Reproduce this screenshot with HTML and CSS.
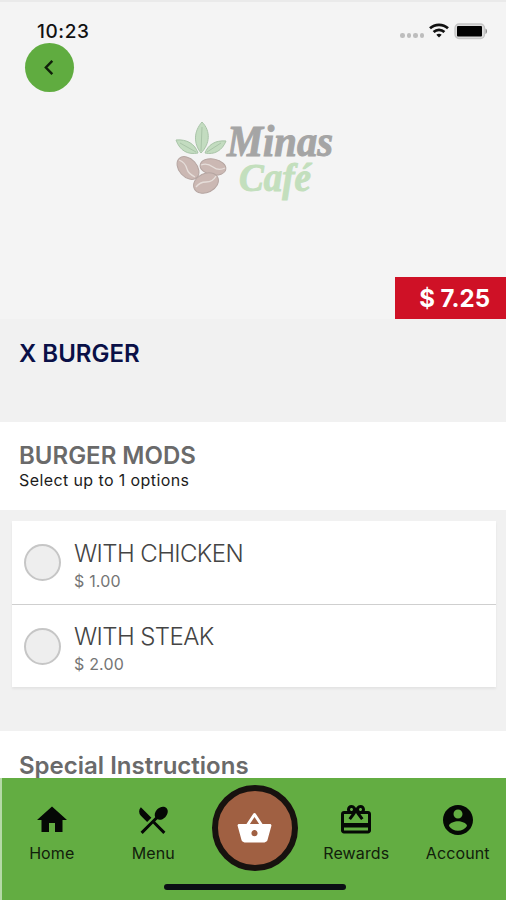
FILE: index.html
```html
<!DOCTYPE html>
<html lang="en">
<head>
  <meta charset="UTF-8">
  <meta name="viewport" content="width=device-width, initial-scale=1.0">
  <title>Minas Café</title>
  <link rel="stylesheet" href="styles.css">
</head>
<body>
  <div class="screen">
    <header class="hero">
      <div class="status-bar">
        <span class="time">10:23</span>
        <div class="status-icons">
          <div class="dots"><i></i><i></i><i></i><i></i></div>
          <svg class="wifi" viewBox="0 0 20 15" fill="none" stroke="#111" stroke-width="2.7">
            <path d="M1 5.3C6 .7 14 .7 19 5.3"/>
            <path d="M4.6 9C7.7 6.1 12.3 6.1 15.4 9"/>
            <path d="M10 14.6l-2.7-2.8c1.6-1.4 3.8-1.4 5.4 0z" fill="#111" stroke="none"/>
          </svg>
          <svg class="battery" viewBox="0 0 34 17">
            <rect x="1" y="1" width="29.5" height="14.5" rx="4" fill="#dcdcdc" stroke="#c4c4c4" stroke-width="1.3"/>
            <rect x="3" y="3" width="25" height="10.5" rx="1" fill="#000"/>
            <path d="M31.5 5.5c2 .8 2 4.7 0 5.5z" fill="#8b8b8b"/>
          </svg>
        </div>
      </div>

      <button class="back-btn" aria-label="Back">
        <svg viewBox="0 0 12 18" fill="none" stroke="#10200a" stroke-width="2.6"><path d="M9.5 2L2.7 9l6.800 7"/></svg>
      </button>

      <svg class="logo" viewBox="0 0 180 100">
        <g fill="#c3dcc0" stroke="#a9c4a8" stroke-width="1">
          <path d="M37 12c-8 9-9 21-1 31 9-9 10-22 1-31z"/>
          <path d="M11 30c4 11 12 15 22 13-3-9-11-14-22-13z"/>
          <path d="M61 31c-11-1-18 4-21 12 9 2 17-2 21-12z"/>
          <path d="M37 17l-1 24M15 33l16 9M56 33l-14 9" fill="none"/>
        </g>
        <g fill="#cbb8b3" stroke="#b5a5a1" stroke-width="1">
          <ellipse cx="23" cy="58" rx="13" ry="9" transform="rotate(48 23 58)"/>
          <ellipse cx="48" cy="57" rx="13" ry="8" transform="rotate(10 48 57)"/>
          <ellipse cx="41" cy="73" rx="13" ry="9.5" transform="rotate(-26 41 73)"/>
        </g>
        <g fill="none" stroke="#e6deda" stroke-width="1.3">
          <path d="M14 50c5 2 7 5 8 9s4 6 8 8"/>
          <path d="M36 55c5-2 8-1 12 2s8 3 12 1"/>
          <path d="M31 77c3-4 6-5 10-5s8-2 10-6"/>
        </g>
        <text class="logo-name" x="62" y="46" textLength="106" lengthAdjust="spacingAndGlyphs">Minas</text>
        <text class="logo-cafe" x="74" y="81" textLength="72" lengthAdjust="spacingAndGlyphs">Café</text>
      </svg>

      <div class="price">$ 7.25</div>
    </header>

    <section class="product">
      <h1>X BURGER</h1>
    </section>

    <section class="mods-header">
      <h2>BURGER MODS</h2>
      <p>Select up to 1 options</p>
    </section>

    <section class="options">
      <label class="option">
        <span class="radio"></span>
        <span class="option-text">
          <span class="option-name">WITH CHICKEN</span>
          <span class="option-price">$ 1.00</span>
        </span>
      </label>
      <label class="option">
        <span class="radio"></span>
        <span class="option-text">
          <span class="option-name">WITH STEAK</span>
          <span class="option-price">$ 2.00</span>
        </span>
      </label>
    </section>

    <section class="instructions">
      <h2>Special Instructions</h2>
    </section>

    <nav class="tab-bar">
      <div class="tabs">
        <a class="tab">
          <svg viewBox="0 0 24 24"><path d="M10 20v-6h4v6h5v-8h3L12 3 2 12h3v8z"/></svg>
          <span>Home</span>
        </a>
        <a class="tab">
          <svg viewBox="0 0 24 24"><path d="M8.1 13.34l2.83-2.83L3.91 3.5a4.008 4.008 0 0 0 0 5.66l4.19 4.18zm6.78-1.81c1.53.71 3.68.21 5.27-1.38 1.91-1.91 2.28-4.65.81-6.12-1.46-1.46-4.2-1.1-6.12.81-1.59 1.59-2.09 3.74-1.38 5.27L3.7 19.87l1.41 1.41L12 14.41l6.88 6.88 1.41-1.41L13.41 13l1.47-1.47z"/></svg>
          <span>Menu</span>
        </a>
        <a class="basket" aria-label="Basket">
          <svg viewBox="0 0 24 24"><path d="M17.21 9l-4.38-6.56c-.19-.28-.51-.42-.83-.42-.32 0-.64.14-.83.43L6.79 9H2c-.55 0-1 .45-1 1 0 .09.01.18.04.27l2.54 9.27c.23.84 1 1.46 1.92 1.46h13c.92 0 1.69-.62 1.93-1.46l2.54-9.27L23 10c0-.55-.45-1-1-1h-4.79zM9 9l3-4.4L15 9H9zm3 8c-1.1 0-2-.9-2-2s.9-2 2-2 2 .9 2 2-.9 2-2 2z"/></svg>
        </a>
        <a class="tab">
          <svg viewBox="0 0 24 24"><path d="M20 6h-2.18c.11-.31.18-.65.18-1 0-1.66-1.34-3-3-3-1.05 0-1.96.54-2.5 1.35l-.5.67-.5-.68C10.96 2.54 10.05 2 9 2 7.34 2 6 3.34 6 5c0 .35.07.69.18 1H4c-1.11 0-1.99.89-1.99 2L2 19c0 1.11.89 2 2 2h16c1.11 0 2-.89 2-2V8c0-1.11-.89-2-2-2zm-5-2c.55 0 1 .45 1 1s-.45 1-1 1-1-.45-1-1 .45-1 1-1zM9 4c.55 0 1 .45 1 1s-.45 1-1 1-1-.45-1-1 .45-1 1-1zm11 15H4v-2h16v2zm0-5H4V8h5.08L7 10.83 8.62 12 11 8.76l1-1.36 1 1.36L15.38 12 17 10.83 14.92 8H20v6z"/></svg>
          <span>Rewards</span>
        </a>
        <a class="tab">
          <svg viewBox="0 0 24 24"><path d="M12 2C6.48 2 2 6.48 2 12s4.48 10 10 10 10-4.48 10-10S17.52 2 12 2zm0 3c1.66 0 3 1.34 3 3s-1.34 3-3 3-3-1.34-3-3 1.34-3 3-3zm0 14.2c-2.5 0-4.71-1.28-6-3.22.03-1.99 4-3.08 6-3.08 1.99 0 5.97 1.09 6 3.08-1.29 1.94-3.5 3.22-6 3.22z"/></svg>
          <span>Account</span>
        </a>
      </div>
      <div class="home-indicator"></div>
    </nav>
  </div>
</body>
</html>
```
FILE: styles.css
```css
* {
  box-sizing: border-box;
  margin: 0;
  padding: 0;
}

body {
  font-family: Inter, "Liberation Sans", sans-serif;
  background-color: #f1f1f1;
}

.screen {
  width: 506px;
  height: 900px;
  overflow: hidden;
  display: flex;
  flex-direction: column;
}

.hero {
  height: 319px;
  flex-shrink: 0;
  background-color: #f4f4f4;
  border-top: 2px solid #eaeaea;
  display: flex;
  flex-direction: column;
}

.status-bar {
  height: 41px;
  padding: 18px 18px 0 37px;
  display: flex;
  justify-content: space-between;
}

.time {
  font-size: 19px;
  line-height: 23px;
  font-weight: 500;
  letter-spacing: 0.6px;
  color: #111;
}

.status-icons {
  display: flex;
  align-items: flex-start;
  padding-top: 3px;
}

.dots {
  display: flex;
  gap: 2px;
  margin: 10px 5px 0 0;
}

.dots i {
  width: 4.5px;
  height: 4.5px;
  border-radius: 50%;
  background-color: #bdbdbd;
}

.wifi {
  width: 20px;
  height: 15px;
  margin-right: 5px;
}

.battery {
  width: 34px;
  height: 17px;
}

.back-btn {
  width: 49px;
  height: 49px;
  margin-left: 25px;
  border: none;
  border-radius: 50%;
  background-color: #60ac40;
  display: flex;
  align-items: center;
  justify-content: center;
  flex-shrink: 0;
}

.back-btn svg {
  width: 12px;
  height: 17px;
  margin-right: 2px;
}

.logo {
  width: 180px;
  height: 100px;
  margin: 18px 0 0 165px;
  flex-shrink: 0;
}

.logo-name,
.logo-cafe {
  font-family: "Liberation Serif", serif;
  font-weight: bold;
  font-style: italic;
  stroke-width: 1;
}

.logo-name {
  font-size: 45px;
  fill: #a5a5a5;
  stroke: #a5a5a5;
}

.logo-cafe {
  font-size: 39px;
  fill: #c3dfbd;
  stroke: #c3dfbd;
}

.price {
  width: 111px;
  height: 42px;
  margin: auto 0 0 auto;
  padding-right: 16px;
  background-color: #cf1126;
  color: #fff;
  font-size: 24px;
  font-weight: 700;
  line-height: 43px;
  text-align: right;
}

.product {
  height: 103px;
  padding: 20px 19px;
  flex-shrink: 0;
}

h1 {
  font-size: 24px;
  line-height: 30px;
  font-weight: 600;
  color: #0a1047;
}

.mods-header {
  height: 88px;
  padding: 19px 19px 0;
  background-color: #fff;
  flex-shrink: 0;
}

h2 {
  font-size: 24px;
  line-height: 30px;
  font-weight: 600;
  color: #6a6a6a;
}

.mods-header p {
  font-size: 16px;
  line-height: 18px;
  letter-spacing: 0.4px;
  color: #1c1c1c;
}

.options {
  margin: 11px 10px 0 12px;
  background-color: #fff;
  box-shadow: 0 2px 2px #e4e4e4;
  flex-shrink: 0;
}

.option {
  display: flex;
  height: 83px;
  padding: 0 12px;
  align-items: center;
}

.option + .option {
  border-top: 1px solid #cfcfcf;
}

.radio {
  width: 37px;
  height: 37px;
  margin-right: 13px;
  border: 2px solid #c6c6c6;
  border-radius: 50%;
  background-color: #eee;
}

.option-text {
  display: flex;
  flex-direction: column;
  padding-top: 6px;
}

.option-name {
  font-size: 24px;
  line-height: 30px;
  font-weight: 300;
  letter-spacing: -0.6px;
  color: #444;
}

.option-price {
  font-size: 16px;
  line-height: 24px;
  letter-spacing: 0.2px;
  color: #757575;
}

.instructions {
  height: 47px;
  margin-top: 44px;
  padding: 20px 19px 0;
  background-color: #fff;
  overflow: hidden;
  flex-shrink: 0;
}

.tab-bar {
  flex: 1;
  background-color: #63ad42;
  border-left: 2px solid #b5d9a6;
}

.tabs {
  height: 106px;
  display: grid;
  grid-template-columns: repeat(5, 101.5px);
  margin-left: -1px;
}

.tab {
  display: flex;
  flex-direction: column;
  align-items: center;
  padding-top: 24px;
  font-size: 16px;
  line-height: 20px;
  letter-spacing: 0.1px;
  color: #11200b;
}

.tab svg {
  width: 36px;
  height: 36px;
  margin-bottom: 5px;
  fill: #050805;
}

.basket {
  width: 86px;
  height: 86px;
  margin-top: 7px;
  justify-self: center;
  border: 6px solid #17120f;
  border-radius: 50%;
  background-color: #a06042;
  display: flex;
  align-items: center;
  justify-content: center;
}

.basket svg {
  width: 37px;
  height: 37px;
  fill: #fff;
}

.home-indicator {
  width: 182px;
  height: 6px;
  margin-left: 162px;
  border-radius: 3px;
  background-color: #0b0f14;
}
```
